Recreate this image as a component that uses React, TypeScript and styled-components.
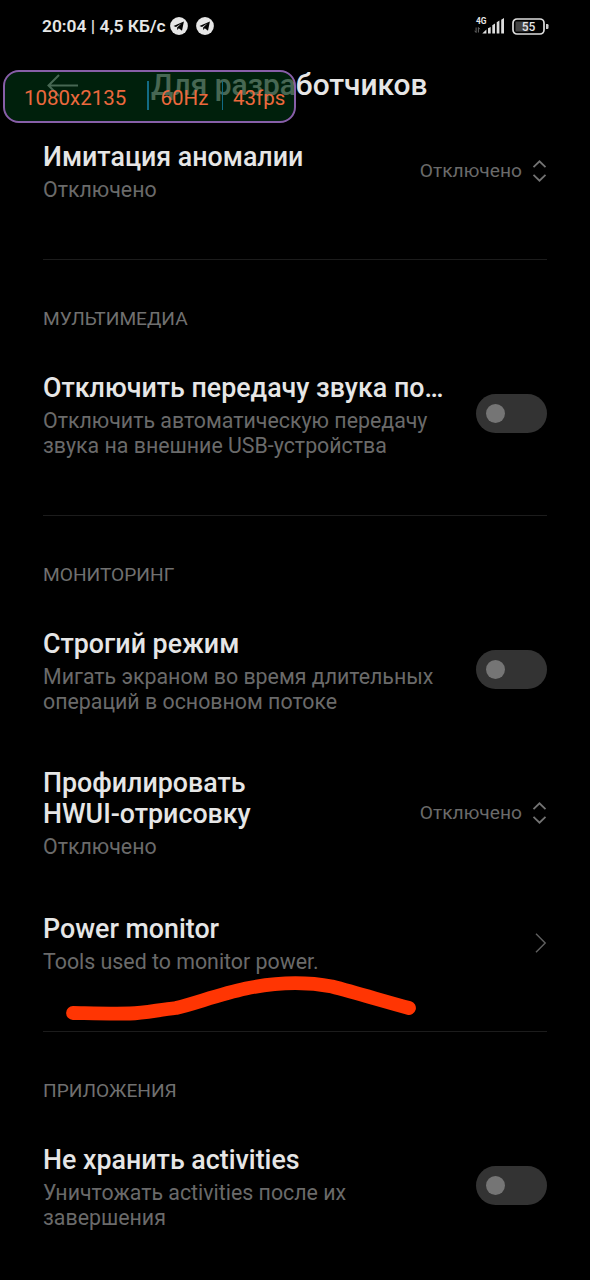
import React from "react";
import styled, { createGlobalStyle } from "styled-components";

const Global = createGlobalStyle`
  html, body { margin: 0; background: #000; }
  *, *::before, *::after { box-sizing: border-box; }
`;

const Screen = styled.div`
  position: relative;
  width: 590px;
  height: 1280px;
  overflow: hidden;
  background: #000;
  color: #e6e6e6;
  font-family: Roboto, "Noto Sans", sans-serif;
`;

const StatusBar = styled.header`
  display: flex;
  align-items: center;
  justify-content: space-between;
  height: 52px;
  padding: 0 41px 0 42px;
`;

const StatusGroup = styled.div<{ $gap: number }>`
  display: flex;
  align-items: center;
  gap: ${(p) => p.$gap}px;
`;

const Clock = styled.span`
  width: 125px;
  margin-right: -5px;
  font-size: 17.4px;
  font-weight: 600;
  line-height: 24px;
  white-space: nowrap;
`;

const TitleBar = styled.div`
  display: flex;
  align-items: center;
  height: 63.5px;
  padding: 2.5px 0 0 47px;
`;

const PageTitle = styled.h1`
  margin: 0 0 0 73px;
  font-size: 29.9px;
  font-weight: 500;
  line-height: 36px;
  white-space: nowrap;
`;

const Overlay = styled.div`
  position: absolute;
  left: 3px;
  top: 70px;
  width: 293px;
  height: 53px;
  display: flex;
  align-items: center;
  border: 2px solid #875fa8;
  border-radius: 16px;
  background: rgba(0, 46, 17, 0.69);
  background-clip: padding-box;
  color: #ec693d;
  font-size: 20.5px;
  line-height: 26px;
`;

const Metric = styled.span<{ $w: number; $pad: number }>`
  width: ${(p) => p.$w}px;
  padding: 2px 0 0 ${(p) => p.$pad}px;
  white-space: nowrap;
`;

const MetricLine = styled.i`
  width: 1.5px;
  height: 29px;
  margin-top: -2px;
  background: #126a84;
`;

const List = styled.main`
  display: flex;
  flex-direction: column;
  padding: 0 43px;
`;

const Section = styled.section`
  padding-bottom: 30px;
  border-bottom: 1px solid #1c1c1c;
  &:last-child { border-bottom: 0; }
`;

const SectionLabel = styled.h2`
  margin: 0;
  padding-top: 47px;
  height: 87px;
  font-size: 19.15px;
  font-weight: 400;
  line-height: 24px;
  color: #707070;
`;

const Row = styled.div`
  display: flex;
  justify-content: space-between;
  align-items: center;
  padding: 26px 0 27px;
  & + & { margin-top: 1.5px; }
`;

const RowText = styled.div`
  white-space: nowrap;
`;

const RowTitle = styled.div`
  font-size: 26.8px;
  font-weight: 500;
  line-height: 31px;
`;

const RowSub = styled.div`
  margin-top: 4px;
  font-size: 21.35px;
  line-height: 25px;
  color: #6a6a6a;
`;

const Value = styled.div`
  display: flex;
  align-items: center;
  gap: 10px;
  margin-bottom: 1.5px;
  font-size: 19.2px;
  line-height: 24px;
  color: #6a6a6a;
`;

const Track = styled.div`
  display: flex;
  align-items: center;
  width: 71px;
  height: 39px;
  margin: 0 0 3px;
  padding-left: 10px;
  border-radius: 20px;
  background: #333;
`;

const Knob = styled.div`
  width: 19px;
  height: 19px;
  border-radius: 50%;
  background: #757575;
`;

const Stroke = styled.svg`
  position: absolute;
  left: 60px;
  top: 970px;
`;

const Telegram = () => (
  <svg width="18" height="18" viewBox="0 0 18 18">
    <circle cx="9" cy="9" r="8.9" fill="#e6e6e6" />
    <path d="M3.5 9 13.9 4.6 12 13.7 8.8 11.3 7.3 12.9 7.1 10.4 11.6 6.3 6 9.9Z" fill="#000" />
  </svg>
);

const Signal = () => (
  <svg width="32" height="18" viewBox="0 0 32 18">
    <text x="2" y="7.2" fontSize="9" fontWeight="700" textLength="10.5" lengthAdjust="spacingAndGlyphs" fill="#e6e6e6">4G</text>
    <path d="M2.1 10.5v5M.7 13.8l1.4 1.7M4.4 15.5v-5l1.4 1.7" fill="none" stroke="#666" strokeWidth="1" />
    <path d="M8.3 16.5 12.4 12.5V16.5ZM14 11.2l2.7-1.3v6.6H14ZM18.3 8.2 21 6.6v9.9h-2.7ZM22.7 5.2l2.7-1.6v12.9h-2.7ZM27.2 2.8 30 1v15.5h-2.8Z" fill="#ddd" />
  </svg>
);

const Battery = () => (
  <svg width="37" height="17" viewBox="0 0 37 17">
    <rect x="1" y="1" width="31" height="15" rx="4" fill="none" stroke="#ddd" strokeWidth="1.7" />
    <path d="M3.5 3.5h13v10h-13Z" fill="#444" />
    <path d="M34 6h1.3q1.2 0 1.2 1.2v2.6q0 1.2-1.2 1.2H34Z" fill="#ccc" />
    <text x="16.6" y="12.9" fontSize="12" fontWeight="500" textAnchor="middle" fill="#e6e6e6">55</text>
  </svg>
);

const Back = () => (
  <svg width="31" height="23" viewBox="0 0 31 23">
    <path d="M31 11.5H1.5M12 1 1.5 11.5 12 22" fill="none" stroke="#e6e6e6" strokeWidth="2" />
  </svg>
);

const UpDown = () => (
  <svg width="15" height="22" viewBox="0 0 15 22">
    <path d="M1.5 7.2 7.5 1.3 13.5 7.2M1.5 14.8 7.5 20.7 13.5 14.8" fill="none" stroke="#737373" strokeWidth="1.8" />
  </svg>
);

const Chevron = () => (
  <svg width="12" height="22" viewBox="0 0 12 22">
    <path d="M1 .8 10.2 10 1 19.2" fill="none" stroke="#606060" strokeWidth="1.4" />
  </svg>
);

const Toggle = () => (
  <Track role="switch" aria-checked={false}>
    <Knob />
  </Track>
);

const Selected = () => (
  <Value>
    Отключено
    <UpDown />
  </Value>
);

export default function App() {
  return (
    <Screen>
      <Global />
      <StatusBar>
        <StatusGroup $gap={8}>
          <Clock>20:04 | 4,5 КБ/с</Clock>
          <Telegram />
          <Telegram />
        </StatusGroup>
        <StatusGroup $gap={6}>
          <Signal />
          <Battery />
        </StatusGroup>
      </StatusBar>
      <TitleBar>
        <Back />
        <PageTitle>Для разработчиков</PageTitle>
      </TitleBar>
      <List>
        <Section>
          <Row>
            <RowText>
              <RowTitle>Имитация аномалии</RowTitle>
              <RowSub>Отключено</RowSub>
            </RowText>
            <Selected />
          </Row>
        </Section>
        <Section>
          <SectionLabel>МУЛЬТИМЕДИА</SectionLabel>
          <Row>
            <RowText>
              <RowTitle>Отключить передачу звука по…</RowTitle>
              <RowSub>
                Отключить автоматическую передачу
                <br />
                звука на внешние USB-устройства
              </RowSub>
            </RowText>
            <Toggle />
          </Row>
        </Section>
        <Section>
          <SectionLabel>МОНИТОРИНГ</SectionLabel>
          <Row>
            <RowText>
              <RowTitle>Строгий режим</RowTitle>
              <RowSub>
                Мигать экраном во время длительных
                <br />
                операций в основном потоке
              </RowSub>
            </RowText>
            <Toggle />
          </Row>
          <Row>
            <RowText>
              <RowTitle>
                Профилировать
                <br />
                HWUI-отрисовку
              </RowTitle>
              <RowSub>Отключено</RowSub>
            </RowText>
            <Selected />
          </Row>
          <Row>
            <RowText>
              <RowTitle>Power monitor</RowTitle>
              <RowSub>Tools used to monitor power.</RowSub>
            </RowText>
            <Chevron />
          </Row>
        </Section>
        <Section>
          <SectionLabel>ПРИЛОЖЕНИЯ</SectionLabel>
          <Row>
            <RowText>
              <RowTitle>Не хранить activities</RowTitle>
              <RowSub>
                Уничтожать activities после их
                <br />
                завершения
              </RowSub>
            </RowText>
            <Toggle />
          </Row>
        </Section>
      </List>
      <Overlay>
        <Metric $w={142} $pad={19}>1080x2135</Metric>
        <MetricLine />
        <Metric $w={73} $pad={12}>60Hz</Metric>
        <MetricLine />
        <Metric $w={68} $pad={10}>43fps</Metric>
      </Overlay>
      <Stroke width="370" height="60" viewBox="60 970 370 60">
        <path
          d="M73 1013C90 1013.3 112 1014 130 1013.5C145 1013 160 1009.5 176 1008C195 1003.5 220 994 246 988.5C275 982.5 305 981.5 332 986.5C355 992.5 380 1000 409 1008"
          fill="none"
          stroke="#ff3503"
          strokeWidth="13.8"
          strokeLinecap="round"
          strokeLinejoin="round"
        />
      </Stroke>
    </Screen>
  );
}
